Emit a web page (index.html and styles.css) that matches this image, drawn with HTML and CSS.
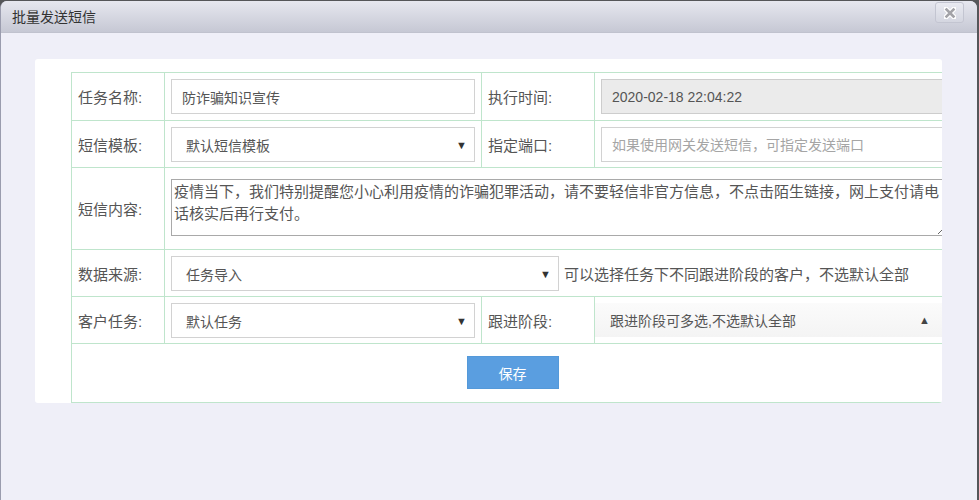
FILE: index.html
```html
<!DOCTYPE html>
<html lang="zh-CN">
<head>
<meta charset="utf-8">
<title>批量发送短信</title>
<link rel="stylesheet" href="styles.css">
</head>
<body>
<div class="window">
  <div class="titlebar">
    <span class="title">批量发送短信</span>
    <button class="close" type="button" aria-label="关闭">
      <svg width="12" height="12" viewBox="0 0 12 12">
        <path d="M2 2 L10 10 M10 2 L2 10" stroke="#ffffff" stroke-width="5" stroke-linecap="square"/>
        <path d="M2.5 2.5 L9.5 9.5 M9.5 2.5 L2.5 9.5" stroke="#a3a3a8" stroke-width="2.6" stroke-linecap="square"/>
      </svg>
    </button>
  </div>
  <div class="content">
    <div class="card">
      <table class="form">
        <colgroup>
          <col class="c1"><col class="c2"><col class="c3"><col class="c4">
        </colgroup>
        <tr class="row first">
          <td class="label">任务名称:</td>
          <td class="field"><input class="text" value="防诈骗知识宣传"></td>
          <td class="label">执行时间:</td>
          <td class="field"><input class="text readonly" value="2020-02-18 22:04:22" readonly></td>
        </tr>
        <tr class="row">
          <td class="label">短信模板:</td>
          <td class="field"><div class="select"><span>默认短信模板</span><span class="arrow">▼</span></div></td>
          <td class="label">指定端口:</td>
          <td class="field"><input class="text" placeholder="如果使用网关发送短信，可指定发送端口"></td>
        </tr>
        <tr class="row">
          <td class="label">短信内容:</td>
          <td class="field area-cell" colspan="3"><textarea class="area">疫情当下，我们特别提醒您小心利用疫情的诈骗犯罪活动，请不要轻信非官方信息，不点击陌生链接，网上支付请电话核实后再行支付。</textarea></td>
        </tr>
        <tr class="row">
          <td class="label">数据来源:</td>
          <td class="field" colspan="3">
            <div class="inline">
              <div class="select wide"><span>任务导入</span><span class="arrow">▼</span></div>
              <span class="hint">可以选择任务下不同跟进阶段的客户，不选默认全部</span>
            </div>
          </td>
        </tr>
        <tr class="row">
          <td class="label">客户任务:</td>
          <td class="field"><div class="select"><span>默认任务</span><span class="arrow">▼</span></div></td>
          <td class="label">跟进阶段:</td>
          <td class="field multi-cell"><div class="multi"><span>跟进阶段可多选,不选默认全部</span><span class="up">▲</span></div></td>
        </tr>
        <tr>
          <td class="actions" colspan="4"><button class="save" type="button">保存</button></td>
        </tr>
      </table>
    </div>
  </div>
</div>
</body>
</html>
```

FILE: styles.css
```css
html, body {
  margin: 0;
  padding: 0;
  height: 100%;
  background: #555659;
}

body {
  font-family: "Liberation Sans", "Noto Sans CJK SC", sans-serif;
  color: #555;
  overflow: hidden;
}

.window {
  margin: 1px 2px 0 0;
  height: 499px;
  background: #efeff8;
  border-left: 1px solid #9a9cae;
  border-radius: 7px 7px 0 0;
  overflow: hidden;
  box-sizing: border-box;
}

.titlebar {
  height: 32px;
  box-sizing: border-box;
  display: flex;
  align-items: flex-start;
  justify-content: space-between;
  padding: 0 13px 0 11px;
  background: linear-gradient(#e6e7ef, #c6c8d4);
  border-bottom: 1px solid #c0c2ce;
}

.title {
  font-size: 14px;
  line-height: 32px;
  color: #333;
}

.close {
  margin-top: 1px;
  width: 29px;
  height: 21px;
  padding: 0;
  border: 1px solid #c3c5d1;
  border-radius: 3px;
  background: linear-gradient(#e9eaf1, #d4d6e0);
  display: flex;
  align-items: center;
  justify-content: center;
}

.content {
  padding: 26px 0 0 34px;
}

.card {
  width: 907px;
  height: 344px;
  box-sizing: border-box;
  background: #fff;
  border-radius: 3px;
  padding: 13px 0 0 36px;
  overflow: hidden;
}

.form {
  width: 882px;
  border-collapse: collapse;
  table-layout: fixed;
  border: 1px solid #bfe5cc;
}

.c1 { width: 93px; }
.c2 { width: 317px; }
.c3 { width: 113px; }
.c4 { width: 359px; }

.form td {
  border: 1px solid #bfe5cc;
  vertical-align: middle;
}

.label {
  padding: 0 6px;
  font-size: 15px;
  color: #555;
  white-space: nowrap;
}

.field {
  padding: 6px 6px 5px;
}

.row.first .field {
  padding-bottom: 6px;
}

.text {
  display: block;
  width: 100%;
  height: 35px;
  box-sizing: border-box;
  border: 1px solid #d2d2d2;
  padding: 0 10px;
  font: 14px "Liberation Sans", "Noto Sans CJK SC", sans-serif;
  color: #555;
  background: #fff;
  outline: none;
}

.text::placeholder {
  color: #a5a5a5;
}

.text.readonly {
  background: #ebebeb;
  border-color: #cdcdcd;
}

.select {
  height: 35px;
  box-sizing: border-box;
  border: 1px solid #d2d2d2;
  padding: 0 7px 0 14px;
  display: flex;
  align-items: center;
  justify-content: space-between;
  font-size: 14px;
  color: #555;
  background: #fff;
}

.select.wide {
  width: 388px;
  flex: none;
}

.arrow {
  font-size: 11px;
  color: #333;
}

.area-cell {
  padding: 11px 6px 13px;
}

.area {
  display: block;
  width: 100%;
  height: 57px;
  box-sizing: border-box;
  border: 1px solid #a9a9a9;
  padding: 1px 2px;
  font: 15px/22px "Liberation Sans", "Noto Sans CJK SC", sans-serif;
  color: #555;
  resize: vertical;
  outline: none;
}

.inline {
  display: flex;
  align-items: center;
  gap: 5px;
}

.hint {
  font-size: 15px;
  color: #555;
  white-space: nowrap;
}

.multi-cell {
  padding: 6px 0 6px;
}

.multi {
  height: 34px;
  box-sizing: border-box;
  padding: 0 23px 0 15px;
  display: flex;
  align-items: center;
  justify-content: space-between;
  background: linear-gradient(#fbfbfb, #f4f4f4);
  font-size: 14px;
  color: #555;
}

.up {
  font-size: 11px;
  color: #444;
}

.actions {
  padding: 12px 0 13px;
  text-align: center;
}

.save {
  display: block;
  margin: 0 auto;
  width: 92px;
  height: 33px;
  border: 1px solid #5499d9;
  background: #5a9ee0;
  color: #fff;
  font: 14px "Liberation Sans", "Noto Sans CJK SC", sans-serif;
  padding: 0;
}
```
